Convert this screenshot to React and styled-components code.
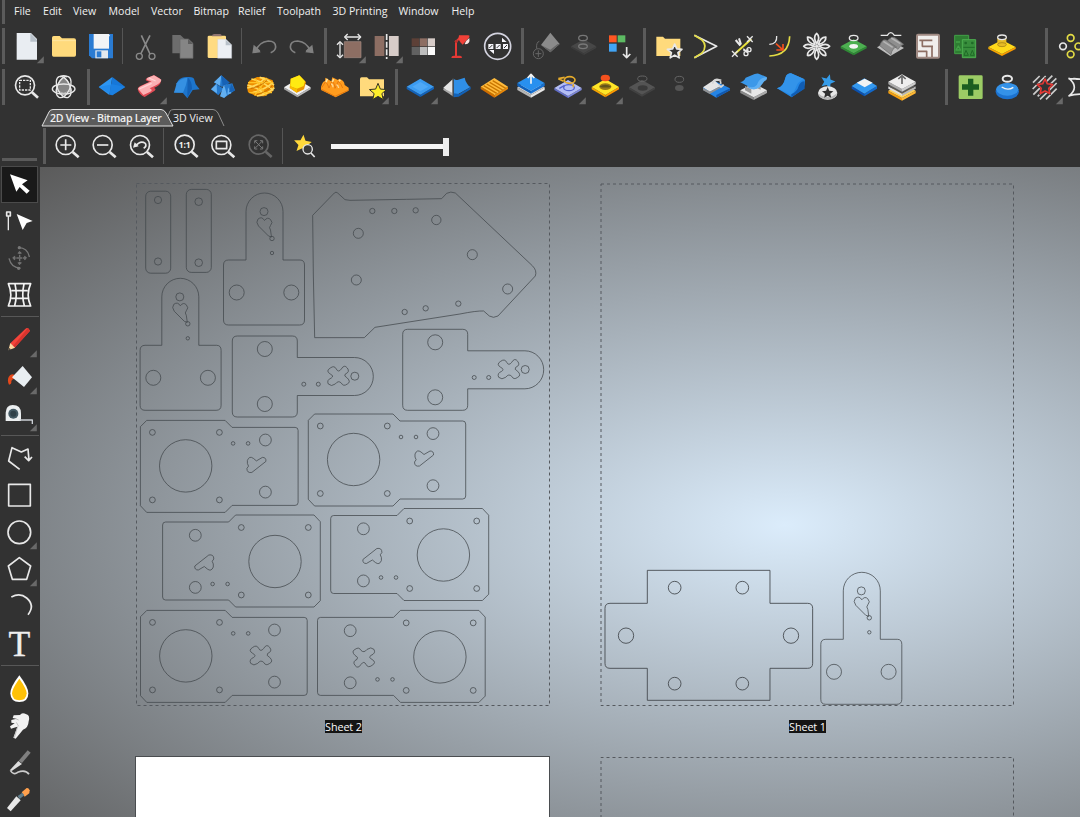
import React from 'react';
import styled, { createGlobalStyle } from 'styled-components';

const GlobalStyle = createGlobalStyle`
  html, body { margin: 0; padding: 0; background: #323232; overflow: hidden; }
  * { box-sizing: border-box; }
`;

const AppFrame = styled.div`
  width: 1080px;
  height: 817px;
  display: flex;
  flex-direction: column;
  overflow: hidden;
  background: #323232;
  color: #f0f0f0;
  font-family: "Open Sans", "Noto Sans", sans-serif;
  font-size: 10.6px;
`;

const MenuBar = styled.nav`
  display: flex;
  align-items: center;
  flex: none;
  height: 24px;
`;

const MenuItem = styled.span`
  width: ${(p) => p.$w}px;
  flex: none;
  height: 24px;
  line-height: 23px;
  white-space: nowrap;
  font-weight: 500;
`;

const Grip = styled.div`
  flex: none;
  width: 3px;
  height: ${(p) => p.$h || 36}px;
  margin-left: ${(p) => p.$l || 0}px;
  margin-right: ${(p) => p.$r || 0}px;
  background: #5b5b5b;
`;

const ToolRow = styled.div`
  display: flex;
  flex: none;
  height: 37px;
  margin-top: 4px;
  overflow: hidden;
`;

const Divider = styled.div`
  flex: none;
  width: 1px;
  height: 36px;
  margin: 0 ${(p) => p.$r}px 0 ${(p) => p.$l}px;
  background: #555;
`;

const ToolButton = styled.div`
  flex: none;
  width: 37px;
  height: 37px;
  background: ${(p) => (p.$active ? '#191919' : 'transparent')};
  outline: ${(p) => (p.$active ? '1px solid #4b4b4b' : 'none')};
  outline-offset: -1px;

  svg { display: block; overflow: visible; }
`;

const Body = styled.div`
  display: flex;
  flex: 1;
  min-height: 0;
`;

const SideBar = styled.aside`
  width: 40px;
  flex: none;
  display: flex;
  flex-direction: column;
  padding: 52px 0 0 1px;
  overflow: hidden;
`;

const SideGrip = styled.div`
  flex: none;
  width: 35px;
  height: 3px;
  margin: 0 0 5px 1px;
  background: #5b5b5b;
`;

const SideDivider = styled.div`
  flex: none;
  height: 1px;
  width: 38px;
  margin: ${(p) => p.$t}px 0 ${(p) => p.$b}px;
  background: #585858;
`;

const MainColumn = styled.main`
  flex: 1;
  min-width: 0;
  display: flex;
  flex-direction: column;
`;

const TabStrip = styled.div`
  display: flex;
  flex: none;
  height: 20px;
  padding: 3px 0 0 2px;
`;

const Tab = styled.div`
  position: relative;
  flex: none;
  width: ${(p) => p.$w}px;
  height: 17px;
  padding-left: ${(p) => p.$pl}px;
  line-height: 18px;
  white-space: nowrap;
  font-weight: ${(p) => (p.$bold ? 600 : 500)};
  letter-spacing: ${(p) => p.$ls}px;
  z-index: ${(p) => (p.$bold ? 1 : 0)};
`;

const TabShape = styled.svg`
  position: absolute;
  left: 0;
  top: 0;
  z-index: -1;
  overflow: visible;
`;

const ViewBar = styled.div`
  display: flex;
  flex: none;
  height: 41px;
  padding: 2px 0 0 3px;
`;

const Slider = styled.div`
  display: flex;
  align-items: center;
  height: 37px;
  margin-left: 8px;
`;

const SliderTrack = styled.div`
  width: 112px;
  height: 5px;
  background: #f4f4f4;
`;

const SliderThumb = styled.div`
  width: 6px;
  height: 18px;
  background: #ededed;
`;

const Canvas = styled.section`
  position: relative;
  flex: 1;
  overflow: hidden;
  background: radial-gradient(ellipse 1052px 506px at 745px 358px, #dbecfb 0%, #5b5b5b 100%);
`;

const Drawing = styled.svg`
  position: absolute;
  inset: 0;
`;

const BlankSheet = styled.div`
  position: absolute;
  left: 95px;
  top: 589px;
  width: 415px;
  height: 70px;
  border: 1px solid #4a4d50;
  background: #fff;
`;

const SheetLabel = styled.div`
  position: absolute;
  left: ${(p) => p.$x}px;
  top: 553px;
  width: 37px;
  height: 13px;
  line-height: 13px;
  background: #141414;
  color: #fafafa;
  text-align: center;
  font-size: 10.8px;
  letter-spacing: -0.1px;
  white-space: nowrap;
`;

/* Icons are drawn on a fine grid, three units to the pixel, centred on (x, y). */
function Tool({ x, y, drop, active, children }) {
  return (
    <ToolButton $active={active}>
      <svg width="37" height="37" viewBox={`${x - 55.5} ${y - 55.5} 111 111`} fill="none" strokeLinejoin="round">
        {children}
        {drop && <path d={`M${x + 52},${y + 29}v21h-21z`} fill="#696969" />}
      </svg>
    </ToolButton>
  );
}

const W = '#e8e8e8';

function Lens({ cx, cy, color = W, children }) {
  return (
    <>
      <circle cx={cx} cy={cy} r="28.5" stroke={color} strokeWidth="5" />
      <path d={`M${cx + 21},${cy + 21}l18,16`} stroke={color} strokeWidth="8" />
      {children}
    </>
  );
}

/* A flat slab seen from above, with a side of thickness t. */
function Slab({ cx, cy, w = 41, h = 23, t = 8, top, side, side2 }) {
  return (
    <>
      <path d={`M${cx - w},${cy}v${t}l${w},${h}v${-t}z`} fill={side} />
      <path d={`M${cx + w},${cy}v${t}l${-w},${h}v${-t}z`} fill={side2 || side} />
      <path d={`M${cx - w},${cy}l${w},${-h}l${w},${h}l${-w},${h}z`} fill={top} />
    </>
  );
}

function star(cx, cy, R, r = R * 0.45, n = 5) {
  const pts = [];
  for (let i = 0; i < n * 2; i++) {
    const a = -Math.PI / 2 + (i * Math.PI) / n;
    const k = i % 2 ? r : R;
    pts.push(`${(cx + k * Math.cos(a)).toFixed(1)},${(cy + k * Math.sin(a)).toFixed(1)}`);
  }
  return pts.join(' ');
}

function FileTools() {
  const y = 139.5;
  return (
    <ToolRow>
      <Grip $l={2} $r={3} />
      <Tool x={79.5} y={y} drop>
        <path d="M50,99h43l18,18v62H50z" fill="#e9edf2" />
        <path d="M91,99l20,21v5H91z" fill="#b9c2cb" />
      </Tool>
      <Tool x={190.5} y={y}>
        <path d="M156,113q0-5 5-5h18l7,7h36q6,0 6,6v44q0,5-5,5h-62q-5,0-5-5z" fill="#ffda7c" />
        <path d="M157,122h70" stroke="#ffe6a0" strokeWidth="3" />
      </Tool>
      <Tool x={301.5} y={y}>
        <path d="M267,102h72v73H276l-9-9z" fill="#2a7bd2" />
        <rect x="281" y="102" width="46" height="44" fill="#f2f4f6" />
        <rect x="286" y="151" width="38" height="24" fill="#e3e8ee" />
        <rect x="290" y="154" width="14" height="18" fill="#2a7bd2" />
        <path d="M326,104h3v5h-3z" fill="#fff" />
      </Tool>
      <Divider $l={3} $r={4} />
      <Tool x={436.5} y={y}>
        <path d="M424,106l26,56M450,106l-28,56" stroke="#8a8a8a" strokeWidth="5" />
        <circle cx="418" cy="169" r="9" stroke="#8a8a8a" strokeWidth="4" />
        <circle cx="456" cy="169" r="9" stroke="#8a8a8a" strokeWidth="4" />
      </Tool>
      <Tool x={547.5} y={y}>
        <path d="M517,105h24l13,12v43h-37z" fill="#6d6d6d" />
        <path d="M540,117h25l14,13v45h-39z" fill="#858585" stroke="#666" strokeWidth="2" />
        <path d="M564,117l15,15h-15z" fill="#5d5d5d" />
      </Tool>
      <Tool x={658.5} y={y}>
        <rect x="623" y="107" width="55" height="67" rx="4" fill="#ffdb82" />
        <path d="M636,109q0-7 7-7h17q5,0 5,7z" fill="#8f7470" />
        <path d="M653,118h25l17,16v41h-42z" fill="#eceff4" stroke="#c9ced5" strokeWidth="1" />
        <path d="M677,119l18,17h-18z" fill="#b9c1ca" />
      </Tool>
      <Divider $l={3} $r={4} />
      <Tool x={793.5} y={y}>
        <path d="M767,153q10-27 38-30q22,0 22,18q-1,12-15,17" stroke="#808080" strokeWidth="5" />
        <path d="M757,160l4-26l20,18z" fill="#808080" /><path d="M757,160l25-3l-9-12z" fill="#808080" />
      </Tool>
      <Tool x={904.5} y={y}>
        <path d="M931,153q-10-27-38-30q-22,0-22,18q1,12,15,17" stroke="#808080" strokeWidth="5" />
        <path d="M941,160l-4-26l-20,18z" fill="#808080" /><path d="M941,160l-25-3l9-12z" fill="#808080" />
      </Tool>
      <Grip $l={4} $r={3} />
      <Tool x={70.5} y={y} drop>
        <rect x="58" y="125" width="50" height="48" fill="#8d6e63" stroke="#a58c84" strokeWidth="2" />
        <path d="M61,111h44M45,128v42" stroke={W} strokeWidth="4" />
        <path d="M68,102l-9,9l9,9M98,102l9,9l-9,9M36,134l9-9l9,9M36,164l9,9l9-9" stroke={W} strokeWidth="4" />
      </Tool>
      <Tool x={181.5} y={y} drop>
        <rect x="149" y="108" width="29" height="60" fill="#8d6e63" />
        <rect x="192" y="108" width="29" height="60" fill="#d7ccc8" />
        <path d="M185,102v75" stroke={W} strokeWidth="5" strokeDasharray="18 5" />
      </Tool>
      <Tool x={292.5} y={y}>
        {['#5d4037', '#8d6e63', '#d7ccc8', '#616161', '#bdbdbd', '#fafafa'].map((c, i) => (
          <rect key={c} x={260 + (i % 3) * 24} y={115 + Math.floor(i / 3) * 26} width="22" height="24" fill={c} />
        ))}
      </Tool>
      <Tool x={403.5} y={y}>
        <path d="M393,169V125l14-14" stroke="#e53935" strokeWidth="6" />
        <path d="M379,174q0-7 7-7h19q6,0 6,7z" fill="#e53935" />
        <path d="M402,106h28q5,0 3,6l-20,22q-16-12-11-28z" fill="#f04138" />
        <path d="M419,132q4-11 14-18q3,17-11,19z" fill="#f8e4e2" />
        <circle cx="394" cy="124" r="5" fill="#b9302b" />
      </Tool>
      <Tool x={514.5} y={y}>
        <circle cx="518" cy="139" r="39" stroke="#d3d3df" strokeWidth="5" />
        {[490, 512, 534].map((v) => (
          <g key={v}><rect x={v} y="132" width="15" height="15" fill="#f5f5fa" /><path d={`M${v + 3},144l9-9`} stroke="#333" strokeWidth="3" /></g>
        ))}
        <path d="M531,113l14,13h-14zM493,150h14v12z" fill="#f5f5fa" />
      </Tool>
      <Grip $l={6} $r={3} />
      <Tool x={661.5} y={y}>
        <path d="M676,98l28,34l-28,25l-28,-22z" fill="#8b8b8b" />
        <path d="M648,135l28,22l28-25l-6,0l-22,17z" fill="#646464" />
        <circle cx="640" cy="161" r="15" stroke="#666" strokeWidth="3" />
        <path d="M635,146q-2-20 8-22M631,161h18M640,151v20" stroke="#666" strokeWidth="3" />
      </Tool>
      <Tool x={772.5} y={y}>
        <Slab cx={776} cy={139} w={38} h={21} t={5} top="#474747" side="#3b3b3b" side2="#414141" />
        <ellipse cx="774" cy="114" rx="13" ry="8" stroke="#777" strokeWidth="4" />
        <ellipse cx="774" cy="139" rx="13" ry="7" stroke="#777" strokeWidth="4" />
      </Tool>
      <Tool x={883.5} y={y} drop>
        <rect x="852" y="106" width="23" height="21" fill="#ff5722" />
        <rect x="878" y="106" width="23" height="21" fill="#5dbb63" />
        <rect x="852" y="131" width="23" height="24" fill="#42a5f5" />
        <path d="M905,141v31M894,162l11,11l11-11" stroke={W} strokeWidth="5" />
      </Tool>
      <Grip $l={5} $r={4} />
      <Tool x={85.5} y={y}>
        <path d="M49,110h20l6,6h46v52H49z" fill="#ffda7c" />
        <polygon points={star(104, 155, 23)} fill="#333" stroke={W} strokeWidth="5" />
      </Tool>
      <Tool x={196.5} y={y}>
        <path d="M163,106l67,33l-67,34" stroke={W} strokeWidth="5" />
        <path d="M163,106l22,13q20,20 0,41l-22,13" stroke="#e3dc45" strokeWidth="5" />
      </Tool>
      <Tool x={307.5} y={y}>
        <path d="M285,161l49-44" stroke="#e8e13c" strokeWidth="6" />
        <path d="M276,153l17,17M276,170l17-17M321,109l17,17M321,126l17-17" stroke={W} strokeWidth="4" />
        <path d="M287,120l14,17M297,115l6,19" stroke={W} strokeWidth="6" />
        <path d="M310,146l13,12M310,152l16-2" stroke={W} strokeWidth="4" />
        <circle cx="327" cy="149" r="6" stroke={W} strokeWidth="4" /><circle cx="318" cy="161" r="6" stroke={W} strokeWidth="4" />
      </Tool>
      <Tool x={418.5} y={y}>
        <path d="M388,133q24-1 22-25" stroke={W} strokeWidth="4" />
        <path d="M388,168q59-1 61-59" stroke="#e3dc45" strokeWidth="5" />
        <path d="M408,131l19,17M429,132v18h-20" stroke="#f4511e" strokeWidth="5" />
      </Tool>
      <Tool x={529.5} y={y}>
        {[0, 45, 90, 135, 180, 225, 270, 315].map((a) => (
          <path key={a} d="M530,132q-12-22 0-32q12,10 0,32z" transform={`rotate(${a} 530 139)`} stroke={W} strokeWidth="5" />
        ))}
        <circle cx="530" cy="139" r="5" fill={W} />
      </Tool>
      <Tool x={640.5} y={y}>
        <Slab cx={641} cy={139} w={39} h={21} t={6} top="#4caf50" side="#2e8b35" />
        <ellipse cx="641" cy="139" rx="13" ry="7" fill="#f5f5f5" />
        <ellipse cx="641" cy="114" rx="13" ry="8" stroke={W} strokeWidth="4" />
      </Tool>
      <Tool x={91.5} y={y}>
        <path d="M62,106h20q10-16 21,0h21" stroke={W} strokeWidth="4" />
        <path d="M51,142l40-22l41,24l-41,24z" fill="#bdbdbd" />
        <path d="M59,137q10-28 27-12l24,16q-14,3-17,23zM82,123q14-18 27-7l22,17q-12,4-17,15z" fill="#8e8e8e" stroke="#6a6a6a" strokeWidth="2" />
        <path d="M70,124l28,18M94,114l27,17" stroke="#b4b4b4" strokeWidth="5" />
      </Tool>
      <Tool x={202.5} y={y}>
        <rect x="171" y="104" width="66" height="69" rx="3" fill="#f1eeec" stroke="#a08a83" strokeWidth="6" />
        <path d="M178,121h39M187,121v18h32M216,139v32M200,171v-17h-26" stroke="#8d6e63" strokeWidth="5" />
      </Tool>
      <Tool x={313.5} y={y}>
        <rect x="284" y="106" width="42" height="55" fill="#2e7d32" stroke="#43a047" strokeWidth="3" />
        <path d="M288,126h12M288,150l7-12l7,12z" stroke="#43a047" strokeWidth="4" />
        <rect x="307" y="119" width="40" height="54" fill="#388e3c" stroke="#4caf50" strokeWidth="3" />
        <circle cx="317" cy="129" r="4" fill="#1f6b27" /><circle cx="337" cy="129" r="4" fill="#1f6b27" />
        <path d="M310,142h34M312,166l6-15l7,15zM331,166l6-15l6,15z" stroke="#1f6b27" strokeWidth="3" />
      </Tool>
      <Tool x={424.5} y={y}>
        <Slab cx={426} cy={141} w={41} h={21} t={6} top="#ffd91a" side="#f5a400" side2="#fb9a00" />
        <path d="M412,112v23q14,12 27,0v-23z" fill="#e7bb25" />
        <ellipse cx="426" cy="134" rx="13" ry="6" stroke="#9d7a10" strokeWidth="2" />
        <ellipse cx="426" cy="112" rx="13" ry="7" fill="#333" stroke={W} strokeWidth="4" />
      </Tool>
      <Grip $l={25} $r={4} />
      <Tool x={631.5} y={y}>
        <circle cx="632" cy="114" r="10" stroke="#e3dc45" strokeWidth="5" />
        <circle cx="609" cy="139" r="10" stroke={W} strokeWidth="5" />
        <circle cx="655" cy="139" r="10" stroke="#e3dc45" strokeWidth="5" />
        <circle cx="632" cy="163" r="10" stroke="#e3dc45" strokeWidth="5" />
      </Tool>
    </ToolRow>
  );
}

function ReliefTools() {
  const y = 262.5;
  return (
    <ToolRow>
      <Grip $l={2} $r={3} />
      <Tool x={79.5} y={y}>
        <Lens cx={75} cy={256}>
          <rect x="59" y="241" width="32" height="29" stroke={W} strokeWidth="4" strokeDasharray="7 3" />
        </Lens>
      </Tool>
      <Tool x={190.5} y={y}>
        <path d="M191,233q17,6 23,40l-23,6l-23-6q6-34 23-40z" fill="#858585" stroke="#b5b5b5" strokeWidth="3" />
        <ellipse cx="191" cy="261" rx="19" ry="34" transform="rotate(24 191 261)" stroke={W} strokeWidth="4" />
        <ellipse cx="191" cy="261" rx="19" ry="34" transform="rotate(-24 191 261)" stroke={W} strokeWidth="4" />
        <ellipse cx="191" cy="267" rx="34" ry="15" stroke={W} strokeWidth="4" />
        <path d="M180,230q11-5 22,0" stroke={W} strokeWidth="5" />
      </Tool>
      <Grip $l={5} $r={4} />
      <Tool x={337.5} y={y}>
        <path d="M296,261l41-30l-9,54z" fill="#2d96f2" />
        <path d="M337,231l39,30l-39,25l-9-2z" fill="#1677d8" />
        <path d="M296,261l41-8l39,8l-39,25z" fill="#1e85e8" opacity=".65" />
      </Tool>
      <Tool x={448.5} y={y} drop>
        <path d="M413,268q0-6 8-10l28-13q-19-3-8-11l20-8q7,2 12,6q14,6 9,14q0,9-20,18q8,3 2,8l-30,19q-16-6-21-23z" fill="#e04b55" />
        <path d="M414,266q3-6 12-9l29-13q-22-5-12-11l19-7l22,13q0,9-19,18l-16,8q13,6-1,12l-18,8z" fill="#fbb0b3" />
        <path d="M418,267l37-17M447,234l20,9" stroke="#ffd3d4" strokeWidth="4" />
      </Tool>
      <Tool x={559.5} y={y}>
        <path d="M521,277q10-8 9-27l6-10q10-10 27-9q20-1 20,9l4,13l12,15l-21,2l-16,25l-14-17z" fill="#1d75cc" />
        <path d="M530,250q10-15 33-17l-6,24l-8,21l-27,0z" fill="#3590e2" /><path d="M563,232q13,12 13,34l-14,27z" fill="#1460b4" />
      </Tool>
      <Tool x={670.5} y={y}>
        <path d="M633,268l15-17l23,15l-16,20zM674,254l23-4l8,21l-33,23zM642,247l22-21l25,22l-23,13z" fill="#2478cc" />
        <path d="M633,268l17-16l1,28zM642,247l22-21l-4,31zM672,252l9,34l-9,8l-12-5zM684,262l10,18l-12,4z" fill="#62aff1" />
        <path d="M664,226l25,22l-21,10zM694,251l11,21l-18,5z" fill="#1762b5" />
      </Tool>
      <Tool x={781.5} y={y}>
        <path d="M741,261l6-18l24-12h21l26,10l5,20l-6,14l-24,14h-23l-26-12z" fill="#ee8f00" />
        <path d="M742,264q38-9 51-30M758,278q39-10 61-31M771,288q34-5 52-25M742,255q37,9 51,30M754,237q40,9 66,35M779,232q28,6 43,24" stroke="#ffd85c" strokeWidth="5" />
        <path d="M744,248h76M748,278h68M764,235l35,52M801,234l-37,53" stroke="#ffc328" strokeWidth="4" />
        <path d="M752,266q38-9 49-27M770,284q34-10 48-28" stroke="#b55d00" strokeWidth="2" />
      </Tool>
      <Tool x={892.5} y={y}>
        <Slab cx={892} cy={262} w={40} h={24} t={6} top="#f2f2f2" side="#a4a4a4" side2="#bcbcbc" />
        <path d="M869,264l3-28l26-10l20,20l-6,22l-22,10z" fill="#e99500" />
        <path d="M872,236l26-10l17,18l-4,14l-20,8l-20-7z" fill="#ffea12" />
        <path d="M871,259l20,8v11l-21-14z" fill="#f8bd00" />
      </Tool>
      <Tool x={28.5} y={y}>
        <path d="M-12,261q5-18 12-18l1-10l18,11l3-12l17,8l3-4q16,4 17,19l12,8v9l-39,20l-44-22z" fill="#ff9c1e" />
        <path d="M-10,263q6-9 12-18q7,9 10,19l10-22q8,11 8,23l10-21q9,8 13,20M-12,267l42,22l40-18" stroke="#db6a08" strokeWidth="2" />
        <path d="M3,247l4-11M22,246l4-9M42,244l4-5" stroke="#ffe39b" strokeWidth="5" />
        <path d="M18,252q6,0 6,10M34,254q6,2 7,10" stroke="#ffd58c" strokeWidth="4" />
      </Tool>
      <Tool x={139.5} y={y} drop>
        <path d="M105,237q0-5 5-5h16l6,6h45v51h-72z" fill="#ffda7c" />
        <polygon points={star(159, 277, 27)} fill="#fff02a" stroke="#353524" strokeWidth="3" />
      </Tool>
      <Grip $l={5} $r={4} />
      <Tool x={286.5} y={y} drop>
        <Slab cx={286} cy={260} w={41} h={24} t={7} top="#3b9bf0" side="#1263bc" />
        <path d="M262,260l24-14l24,14l-24,14z" fill="#68b8fa" opacity=".45" />
      </Tool>
      <Tool x={397.5} y={y}>
        <path d="M355,263l28-25v50z" fill="#e5e5e5" /><path d="M355,265l28,14v9l-28-18z" fill="#aaa" />
        <path d="M386,236q6,6 14,3l19-6q2,12 8,19q4,7 10,9l-36,20l-15,9z" fill="#2f8fe8" />
        <path d="M386,280l16,2l35-21v7l-36,22l-15,2z" fill="#1262b8" />
        <path d="M384,235v56" stroke="#4e4e4e" strokeWidth="3" />
      </Tool>
      <Tool x={508.5} y={y}>
        <Slab cx={508} cy={260} w={41} h={26} t={7} top="#ffbb3c" side="#d36a00" side2="#ea8808" />
        <path d="M476,257l39,23M485,252l39,23M494,247l39,23M503,242l39,23M469,263l38,22" stroke="#c97600" strokeWidth="4" />
      </Tool>
      <Tool x={619.5} y={y}>
        <Slab cx={618} cy={262} w={41} h={23} t={8} top="#d5d5d5" side="#b5b5b5" side2="#e6e6e6" />
        <Slab cx={618} cy={249} w={41} h={23} t={9} top="#2890ef" side="#0e60bb" side2="#1770d0" />
        <path d="M618,251v-26M608,234l10-11l10,11" stroke="#f3f3f3" strokeWidth="5" />
      </Tool>
      <Tool x={730.5} y={y} drop>
        <Slab cx={729} cy={264} w={41} h={24} t={6} top="#b4bef6" side="#606cc8" side2="#7c87da" />
        <ellipse cx="732" cy="263" rx="16" ry="9" stroke="#5161cc" strokeWidth="4" />
        <ellipse cx="734" cy="240" rx="16" ry="10" stroke="#e5ab2b" strokeWidth="5" />
        <path d="M700,236l19-4M700,236l16,8M745,252v10" stroke="#e5ab2b" strokeWidth="5" />
        <path d="M703,265l16-9" stroke="#5161cc" strokeWidth="4" />
      </Tool>
      <Tool x={841.5} y={y} drop>
        <Slab cx={841} cy={261} w={41} h={24} t={7} top="#ffe527" side="#f4a200" side2="#ff9800" />
        <ellipse cx="841" cy="260" rx="18" ry="10" fill="#9a7a18" /><path d="M823,260q18-12 36,0q-17,5-36,0z" fill="#62541a" />
        <ellipse cx="841" cy="234" rx="14" ry="10" fill="#f4511e" />
      </Tool>
      <Tool x={7.5} y={y}>
        <Slab cx={6} cy={262} w={39} h={22} t={6} top="#545454" side="#424242" />
        <ellipse cx="8" cy="264" rx="15" ry="8" fill="#3a3a3a" />
        <ellipse cx="7" cy="236" rx="14" ry="8" stroke="#666" strokeWidth="3" />
      </Tool>
      <Tool x={118.5} y={y}>
        <ellipse cx="118" cy="238" rx="13" ry="9" stroke="#656565" strokeWidth="3" />
        <ellipse cx="118" cy="264" rx="13" ry="9" fill="#555" />
      </Tool>
      <Tool x={229.5} y={y}>
        <path d="M189,263l35-20l46,22v6l-41,22l-40-24z" fill="#2584e4" /><path d="M189,262l33-22l20,18l-33,17z" fill="#e4e4e4" />
        <path d="M189,264v7l20,11v-8zM209,275l33-17v5l-33,19z" fill="#919191" />
        <path d="M229,293l41-22v-6l-41,20z" fill="#1159b0" />
        <path d="M218,251q0-11 13-13q13,1 11,14M224,241l20-1M235,254l8,7l8-7" stroke="#d5d5d5" strokeWidth="5" />
      </Tool>
      <Tool x={340.5} y={y}>
        <Slab cx={341} cy={271} w={40} h={21} t={8} top="#e7e7e7" side="#888" side2="#aaa" />
        <path d="M315,258v13l19,10v-13zM350,264l12,5v-10z" fill="#999" />
        <path d="M300,246q12-1 17-13l27-11q8-3 12-1l24,10l-21,25q-8,15-22,10q-13,0-14-8z" fill="#3b98e9" />
        <path d="M323,258q17,9 28-4q7-20 29-23q4,8-7,13l-14,18q-21,14-36-4z" fill="#60b0f3" />
      </Tool>
      <Tool x={451.5} y={y}>
        <path d="M411,265q19-3 26-34q4-11 16-11l39,17q5,2 2,16l-4,14l-35,25z" fill="#2488e6" />
        <path d="M411,265q19-3 26-34q4-11 16-11l39,17q-19,7-26,29q-4,12-14,18z" fill="#3394ea" />
        <path d="M494,244v22l-40,26v-9q18-9 22-25q5-14 18-14z" fill="#105db4" />
      </Tool>
      <Tool x={562.5} y={y}>
        <polygon points={star(563, 245, 23)} transform="rotate(17 563 245)" fill="#359ce9" />
        <ellipse cx="563" cy="279" rx="29" ry="20" fill="#e7e7e7" /><path d="M535,279q3,19 28,19q26-2 28-19q-13,13-28,12q-19,1-28-12z" fill="#b6b6b6" />
        <polygon points={star(563, 279, 18)} fill="#303030" />
      </Tool>
      <Tool x={673.5} y={y}>
        <Slab cx={673} cy={258} w={38} h={23} t={8} top="#3499f0" side="#0b50af" side2="#1269cb" />
        <path d="M650,248l24-12l24,12l-24,14z" fill="#f3f3f3" />
      </Tool>
      <Tool x={124.5} y={y}>
        <Slab cx={126} cy={272} w={41} h={22} t={8} top="#ffd25b" side="#f39c0d" side2="#ffb632" />
        <Slab cx={126} cy={259} w={41} h={22} t={7} top="#595959" side="#dedede" side2="#b9b9b9" />
        <Slab cx={126} cy={245} w={41} h={22} t={8} top="#eee" side="#aaa" side2="#cdcdcd" />
        <path d="M126,252v-23M115,237l11-10l11,10" stroke="#666" strokeWidth="5" />
      </Tool>
      <Grip $l={25} $r={5} />
      <Tool x={334.5} y={y}>
        <rect x="296" y="226" width="72" height="71" rx="4" fill="#9ccc65" />
        <path d="M332,236v51M306,261h51" stroke="#1b5e20" strokeWidth="16" />
      </Tool>
      <Tool x={445.5} y={y}>
        <ellipse cx="442" cy="274" rx="35" ry="24" fill="#1c72cf" />
        <ellipse cx="442" cy="268" rx="33" ry="19" fill="#3492e8" />
        <path d="M425,261q19,12 35,1" stroke="#f3f3f3" strokeWidth="4" />
        <ellipse cx="442" cy="236" rx="14" ry="9" fill="#333" stroke={W} strokeWidth="6" />
      </Tool>
      <Tool x={556.5} y={y} drop>
        <path d="M519,248l20-20M518,267l39-39M520,284l57-57M533,289l56-54M540,298l50-49M558,298l32-32" stroke="#ccc" strokeWidth="5" />
        <polygon points={star(555, 261, 31, 15)} fill="#333" />
        <polygon points={star(555, 261, 24, 12)} fill="#333" stroke="#e53935" strokeWidth="5" />
      </Tool>
      <Tool x={667.5} y={y}>
        <path d="M625,235q10,3 17,1q23,4 48-3M625,288q31-10 65-3M627,235q32,27 0,53" stroke={W} strokeWidth="5" />
      </Tool>
    </ToolRow>
  );
}

function SideTools() {
  return (
    <SideBar>
      <SideGrip />
      <Tool x={58.5} y={238.5} active>
        <path d="M30,208l53,18l-17,12l23,19l-9,9l-21-20l-10,14z" fill="#fff" />
      </Tool>
      <Tool x={58.5} y={349.5}>
        <path d="M50,327l48,21l-18,6l-12,21z" fill="#fff" />
        <path d="M25,333v43" stroke={W} strokeWidth="4" /><rect x="20" y="321" width="11" height="12" stroke={W} strokeWidth="5" />
      </Tool>
      <Tool x={58.5} y={460.5}>
        <path d="M57,428q26,1 31,28M61,489q-27,0-34-29" stroke="#777" strokeWidth="4" />
        <circle cx="58" cy="428" r="5" fill="#777" /><circle cx="56" cy="490" r="5" fill="#777" />
        <path d="M59,440v38M39,459h40M54,446l5-6l5,6M54,472l5,6l5-6M45,454l-6,5l6,5M73,454l6,5l-6,5" stroke="#707070" strokeWidth="4" strokeDasharray="8 2" />
      </Tool>
      <Tool x={58.5} y={571.5}>
        <path d="M25,536h67q-15,34 0,67H25q15-33 0-67zM34,557h49M34,580h49M45,537q8,34-1,65M72,537q-8,34 1,65" stroke="#f3f3f3" strokeWidth="5" />
      </Tool>
      <SideDivider $t={2} $b={5} />
      <Tool x={58.5} y={76.5} drop>
        <path d="M75,43q9-9 15,4l-46,51l-13-13z" fill="#f4443a" /><path d="M84,39l6,9l-46,50l-5-5z" fill="#d8342e" />
        <path d="M31,84l14,14l-20,8z" fill="#ffd7a0" /><path d="M27,99l6,4l-8,3z" fill="#323232" />
      </Tool>
      <Tool x={58.5} y={187.5} drop>
        <path d="M45,181q-12-9-19,5q-5,11 1,23q8,0 7-10q2-9 13-8z" fill="#e6491b" />
        <path d="M68,153l28,34l-24,29l-36-29z" fill="#e9eef2" />
      </Tool>
      <Tool x={58.5} y={298.5} drop>
        <path d="M17,318v-25q1-22 21-23q25,0 25,25v23z" fill="#eceff1" /><circle cx="40" cy="296" r="15" fill="#455a64" />
        <circle cx="40" cy="296" r="9" fill="#304149" /><path d="M59,315h38v12" stroke="#ccd0d5" strokeWidth="4" />
      </Tool>
      <SideDivider $t={2} $b={4} />
      <Tool x={58.5} y={430.5}>
        <path d="M59,463L26,438l10-40l28,13l20-9l3,34M74,425l12,12l10-11" stroke={W} strokeWidth="5" />
      </Tool>
      <Tool x={58.5} y={541.5}><rect x="26" y="508" width="65" height="65" stroke={W} strokeWidth="5" /></Tool>
      <Tool x={58.5} y={652.5} drop><circle cx="58" cy="652" r="34" stroke={W} strokeWidth="5" /></Tool>
      <Tool x={58.5} y={28.5} drop><path d="M58,-7l34,25l-12,40H37L25,18z" stroke={W} strokeWidth="5" /></Tool>
      <Tool x={58.5} y={139.5}><path d="M34,111q26-14 46,3q26,22 4,50" stroke={W} strokeWidth="5" /></Tool>
      <Tool x={58.5} y={250.5}>
        <text x="58.5" y="287" textAnchor="middle" fontFamily="Liberation Serif, serif" fontSize="107" fill="#efefef" stroke="#efefef">T</text>
      </Tool>
      <SideDivider $t={3} $b={4} />
      <Tool x={58.5} y={385.5}>
        <path d="M58,346q-27,35-27,54q1,26 27,26q27,0 27-26q0-18-27-54z" fill="#fff" />
        <path d="M58,356q-22,31-22,44q1,21 22,21t22-21q0-13-22-44z" fill="#ffc107" />
      </Tool>
      <Tool x={58.5} y={496.5}>
        <path d="M47,536l-7-3l12-33l-19,6l-3-7l14-9l-10-2l0-8l16-4l-12-2l3-8l19-1q6-10 19-2q12,3 7,21q-1,20-17,25z" fill="#f2f2f2" />
        <path d="M49,487l7,12M44,475l12,5M53,500l-10,33" stroke="#aaa" strokeWidth="2" />
      </Tool>
      <Tool x={58.5} y={607.5}>
        <path d="M56,602l27-31l9,7l-26,31z" fill="#808080" />
        <path d="M55,603l11,9l-31,21l-5-3z" fill="#ddd" />
        <path d="M31,631q10,16 22,6q24-9 34,6" stroke="#ccc" strokeWidth="5" />
      </Tool>
      <Tool x={58.5} y={718.5}>
        <path d="M65,697l15-13q6-1 9,7l-1,9l-14,10z" fill="#ffa04d" /><path d="M53,708l14-10l6,8l-14,11z" fill="#607d8b" />
        <path d="M49,709l13,12l-30,33l-11-10z" fill="#e9e9e9" />
      </Tool>
    </SideBar>
  );
}

function ViewTools() {
  const y = 439.5;
  return (
    <ViewBar>
      <Grip $r={2} />
      <Tool x={199.5} y={y}><Lens cx={197} cy={435}><path d="M181,435h33M197,418v33" stroke={W} strokeWidth="5" /></Lens></Tool>
      <Tool x={310.5} y={y}><Lens cx={308} cy={435}><path d="M291,435h34" stroke={W} strokeWidth="5" /></Lens></Tool>
      <Tool x={421.5} y={y}>
        <Lens cx={420} cy={435}><path d="M406,439q15-19 30-9q5,9-5,15" stroke={W} strokeWidth="5" /><path d="M399,443l5-16l12,12z" fill={W} /></Lens>
      </Tool>
      <Divider $l={4} $r={3} />
      <Tool x={556.5} y={y}>
        <Lens cx={554} cy={434}>
          <text x="554" y="443" textAnchor="middle" fontSize="25" fontWeight="700" fontFamily="Open Sans, sans-serif" fill="#f3f3f3">1:1</text>
        </Lens>
      </Tool>
      <Tool x={667.5} y={y}><Lens cx={664} cy={435}><rect x="649" y="424" width="31" height="22" stroke={W} strokeWidth="5" /></Lens></Tool>
      <Tool x={778.5} y={y}>
        <Lens cx={776} cy={434} color="#666"><path d="M764,430v-8h8M780,422h8v8M788,439v8h-8M772,447h-8v-8M765,423l22,22M787,423l-22,22" stroke="#777" strokeWidth="3" /></Lens>
      </Tool>
      <Divider $l={4} $r={3} />
      <Tool x={913.5} y={y}>
        <polygon points={star(908, 432, 28, 13)} transform="rotate(5 908 432)" fill="#ffd83b" />
        <circle cx="923" cy="448" r="14" fill="#383838" stroke={W} strokeWidth="4" />
        <path d="M933,459l11,12" stroke={W} strokeWidth="5" />
      </Tool>
      <Slider><SliderTrack /><SliderThumb /></Slider>
    </ViewBar>
  );
}

function Hole({ x, y, r }) {
  return <circle cx={x} cy={y} r={r} />;
}

const FLOWER = 'M-8,-8q4,-3 6,1q2,4 5,0q3,-5 6,-1q3,4 -2,6q-2,2 2,4q4,4 0,6q-4,3 -6,-1q-3,-3 -6,1q-4,3 -7,0q-2,-4 3,-6q3,-2 -1,-4q-5,-3 0,-6z';
const HEART = 'M-9,-5q2,-5 6,-2l3,2.5l6,-3.5q4,0 3.5,4l-14,11q-5,1 -5,-4q3,-2 .5,-5z';

/* Upright bracket: x is its middle, y the top of the arch. */
function Bracket({ x, y, neck = 0 }) {
  return (
    <g transform={`translate(${x} ${y})`}>
      <path d={`M${-18 + neck},67V18.5a18.5,18.5 0 0 1 37,0V67h${17 - neck}q4.500,0 4.500,5v55q0,5 -5,5h-71q-5,0 -5,-5v-55q0,-5 5,-5z`} />
      <Hole x={-27.300} y={99.500} r={7.5} /><Hole x={27.300} y={99.500} r={7.5} />
      <g transform={`translate(${neck} 0)`}>
        <Hole x={0} y={18.600} r={4} /><Hole x={8} y={45.500} r={2.200} /><Hole x={8} y={60} r={1.700} />
        <path d="M-6,26q4,-3 6.500,1.500q3,-4 6,-1q3,3 0,6q-2,2 0,4.500l1,7l-3,-1l-10,-10q-3,-4 -.5,-7z" />
      </g>
    </g>
  );
}

/* Bracket lying on its side: x, y is the corner of its plate. */
function SideBracket({ x, y }) {
  return (
    <g transform={`translate(${x} ${y})`}>
      <path d="M5,0h55q5,0 5,5v16.500h57.200a18.800,19 0 0 1 0,38h-57.200v16.500q0,5 -5,5h-55q-5,0 -5,-5v-71q0,-5 5,-5z" />
      <Hole x={32.500} y={13} r={7.5} /><Hole x={32.500} y={68} r={7.5} />
      <Hole x={71.500} y={48.200} r={2} /><Hole x={86} y={48.200} r={2} /><Hole x={122.500} y={40.200} r={4} />
      <path d={FLOWER} transform="translate(106 40)" />
    </g>
  );
}

/* Motor plate, w wide; turned plates are rotated half a turn in place. */
function MotorPlate({ x, y, w = 158, turned, flower }) {
  return (
    <g transform={`translate(${x} ${y})${turned ? ` rotate(180 ${w / 2} 46)` : ''}`}>
      <path d={`M0,6.300L6.300,0H84.700L91.700,7H${w - 3}q3,0 3,3V82q0,3 -3,3H91.700L84.700,92H6.300L0,85.300z`} />
      <Hole x={45.300} y={45.500} r={26.200} />
      {[[12, 12], [79, 12], [12, 79.500], [79, 79.500]].map(([a, b]) => <Hole key={`${a}-${b}`} x={a} y={b} r={2.900} />)}
      <Hole x={92.700} y={23} r={1.800} /><Hole x={107.700} y={23} r={1.800} />
      <Hole x={w - 32.700} y={19.600} r={5.900} /><Hole x={w - 32.700} y={71.700} r={5.900} />
      <path d={flower ? FLOWER : HEART} transform={`translate(${flower ? w - 46.500 : w - 41.700} 45)`} />
    </g>
  );
}

function SheetCanvas() {
  return (
    <Canvas>
      <Drawing width="1040" height="650" viewBox="40 167 1040 650" fill="none" stroke="#42474b" strokeWidth="0.75">
        <g stroke="#55595e" strokeWidth="1" strokeDasharray="3 3">
          <path d="M136.500,183.500H549.500V705.500H136.500z" />
          <path d="M601,184H1013.500V705.500H601z" />
          <path d="M601,830V757.500H1013.500V830" />
        </g>
        <rect x="145.700" y="191.200" width="25" height="82" rx="5" />
        <Hole x={158} y={200} r={3.600} /><Hole x={158} y={261.500} r={3.600} />
        <rect x="186.300" y="189.400" width="25" height="83" rx="5" />
        <Hole x={198.700} y={201.700} r={3.800} /><Hole x={198.700} y={262.700} r={3.800} />
        <Bracket x={264} y={193} />
        <Bracket x={180.600} y={278.300} neck={-0.8} />
        <SideBracket x={232.300} y={336} />
        <SideBracket x={402.700} y={329.300} />
        <g transform="translate(300 175) scale(.3333)" strokeWidth="2.250">
          <path d="M38,121L103,54Q108,49 113,54L135,74L150,76L320,73L425,71L440,55Q452,48 466,54L697,272Q712,287 706,303L594,423Q580,431 568,423L551,408Q530,407 480,417L225,457L193,488H44L40,300z" />
          <Hole x={175} y={175} r={15} /><Hole x={409} y={135} r={14} /><Hole x={517} y={239} r={15} />
          <Hole x={169} y={315} r={15} /><Hole x={623} y={342} r={15} />
          <Hole x={217} y={108} r={8} /><Hole x={283} y={108} r={8} /><Hole x={347} y={106} r={8} />
          <Hole x={314} y={411} r={8} /><Hole x={377} y={400} r={8} /><Hole x={475} y={386} r={8} />
        </g>
        <MotorPlate x={140.400} y={420.400} w={157.700} />
        <MotorPlate x={308.300} y={414} w={157.400} />
        <MotorPlate x={162.600} y={515} w={157.700} turned />
        <MotorPlate x={330.700} y={508.500} turned />
        <MotorPlate x={140.500} y={610.400} w={166.700} flower />
        <MotorPlate x={317.500} y={610.400} w={167.700} flower turned />
        <g transform="translate(590 550) scale(.3333)" strokeWidth="2.600">
          <path d="M172,61H540V160H653q15,0 15,15V340q0,15 -15,15H540V451H172V355H60q-15,0 -15,-15V175q0,-15 15,-15H172z" />
          <Hole x={254} y={113} r={19} /><Hole x={457} y={113} r={19} /><Hole x={254} y={401} r={19} />
          <Hole x={457} y={401} r={19} /><Hole x={108} y={257} r={23} /><Hole x={603} y={257} r={23} />
        </g>
        <Bracket x={861.300} y={572.300} />
      </Drawing>
      <BlankSheet />
      <SheetLabel $x={285}>Sheet 2</SheetLabel>
      <SheetLabel $x={749}>Sheet 1</SheetLabel>
    </Canvas>
  );
}

const MENU = [
  ['File', 29], ['Edit', 30], ['View', 35.5], ['Model', 42.5], ['Vector', 42.5], ['Bitmap', 44.5],
  ['Relief', 39], ['Toolpath', 55.500], ['3D Printing', 66], ['Window', 53], ['Help', 40],
];

export default function App() {
  return (
    <AppFrame>
      <GlobalStyle />
      <MenuBar>
        <Grip $h={24} $l={2} $r={9} />
        {MENU.map(([label, w]) => <MenuItem key={label} $w={w}>{label}</MenuItem>)}
      </MenuBar>
      <FileTools />
      <ReliefTools />
      <Body>
        <SideTools />
        <MainColumn>
          <TabStrip>
            <Tab $w={131} $pl={8} $bold $ls={-0.28}>
              <TabShape width="131" height="17">
                <path d="M0,17L7,3Q8,.5 11,.5H119Q122,.5 124,4L131,17z" fill="#5b5b5b" stroke="#e0e0e0" />
              </TabShape>
              2D View - Bitmap Layer
            </Tab>
            <Tab $w={52} $pl={0} $ls={0}>
              <TabShape width="52" height="17">
                <path d="M-5,7L-3,2Q-2,.5 1,.5H40Q43,.5 45,4L51,17" fill="none" stroke="#8c8c8c" />
              </TabShape>
              3D View
            </Tab>
          </TabStrip>
          <ViewTools />
          <SheetCanvas />
        </MainColumn>
      </Body>
    </AppFrame>
  );
}
